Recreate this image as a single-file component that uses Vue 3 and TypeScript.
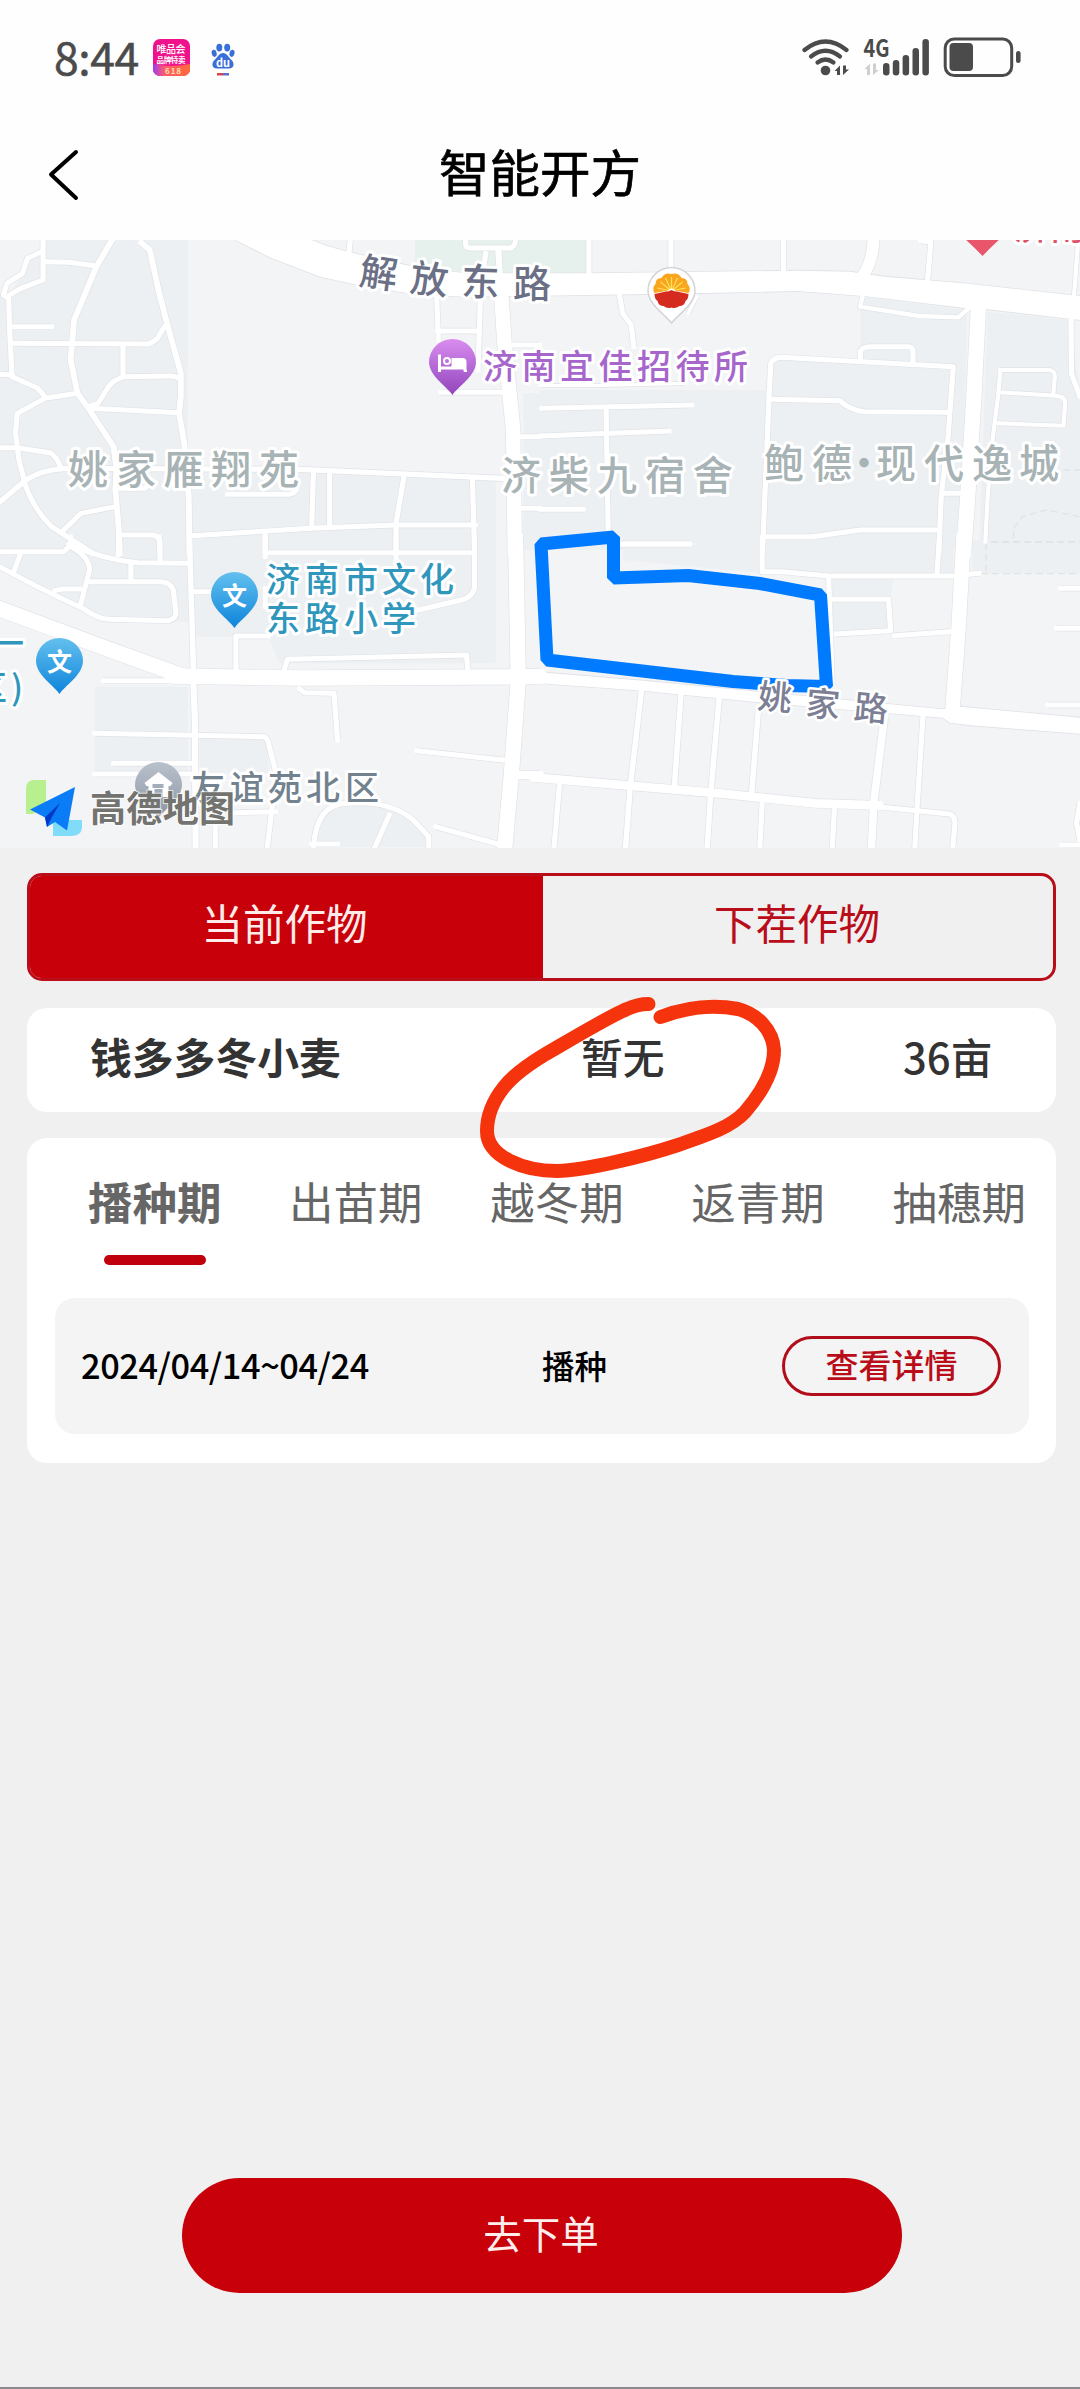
<script setup lang="ts">
import { ref } from 'vue'

interface Road { d: string; w?: number }
interface Tile { transform: string; areas: string[]; wide: string[]; roads: Road[]; dashed?: string }
interface Label { text: string; x: string; y: string; size: number; kind: string; rotate?: string }

// The map is made of four tiles; every tile has a 1568 x 960 grid of its own.
const tileAt = (x: number, y: number) => `translate(${x} ${y}) scale(0.34439 0.33333)`

const tiles: Tile[] = [
  {
    transform: tileAt(0, 230),
    areas: [
      'M135 30H545V960H0V200L25 200L65 130L80 85L125 65Z',
      'M555 720L870 725L1440 750V960H555Z',
      'M1520 490H1568V960H1520Z',
    ],
    wide: ['M680 28L790 85L930 140L1040 165L1200 192L1350 200L1568 197V130L1350 130L1200 110L1060 78L990 60L940 45L900 28Z'],
    roads: [
      { d: 'M1447 60L1455 200', w: 18 },
      { d: 'M1455 190L1465 340L1490 600L1495 970', w: 42 },
      { d: 'M125 30V150L60 175L20 200' },
      { d: 'M120 65L80 85L65 130L20 160L10 195L25 205L28 300L35 440L110 475L130 500' },
      { d: 'M135 95L200 97L280 108' },
      { d: 'M325 30L280 110L215 270L205 390L225 490L260 540L330 650L338 720L335 780L345 900L348 970', w: 17 },
      { d: 'M40 290H150' },
      { d: 'M35 340L430 342Q455 335 465 310L485 280' },
      { d: 'M410 38L435 60L460 180L485 280L525 430V500L520 550L535 640L548 800L550 970', w: 17 },
      { d: 'M357 345V430' },
      { d: 'M525 450Q515 438 490 438L360 440Q330 450 315 470L285 520L255 530' },
      { d: 'M260 535L520 548' },
      { d: 'M0 433L35 435' },
      { d: 'M225 490L130 505L50 550L45 610L55 690L75 770Q100 840 150 890L270 970' },
      { d: 'M0 653H50L145 668Q165 680 175 710' },
      { d: 'M0 815L75 750Q120 720 190 715L870 718L1460 745', w: 16 },
      { d: 'M335 830L235 850L185 900' },
      { d: 'M355 915H445Q465 920 465 940V970' },
      { d: 'M335 775H420L440 760' },
      { d: 'M660 793H840Q855 790 860 780' },
      { d: 'M910 730L905 885' }, { d: 'M957 730V885' },
      { d: 'M1172 745L1150 880V970' }, { d: 'M1372 750L1378 970' },
      { d: 'M560 917L900 895L1150 885H1380' }, { d: 'M770 910V970' },
      { d: 'M1268 200L1273 330' }, { d: 'M1270 303H1390' },
      { d: 'M1410 70L1395 200L1388 420' }, { d: 'M1280 487H1460' },
      { d: 'M1352 20V42Q1352 54 1365 54H1480Q1498 52 1498 20' },
      { d: 'M1017 30L1012 80' },
      { d: 'M1515 620H1568' }, { d: 'M1515 835H1568' }, { d: 'M1490 345H1568' },
    ],
  },
  {
    transform: tileAt(540, 230),
    areas: [
      'M0 480H660V960H0Z',
      'M930 200L1240 240L1225 960H650L670 385H930Z',
      'M1300 245L1540 270L1568 500V960H1275Z',
    ],
    wide: ['M0 130H140L750 122L900 125L1000 140L1230 160L1568 198V270L1300 238L1240 235L940 198L750 183L450 190L0 197Z'],
    roads: [
      { d: 'M142 20V135' }, { d: 'M380 20V130' }, { d: 'M707 20V130', w: 16 },
      { d: 'M968 20Q970 90 935 140', w: 34 },
      { d: 'M1105 32L1135 36L1125 155', w: 15 }, { d: 'M1562 40L1550 205', w: 12 },
      { d: 'M1273 230L1260 500L1242 800L1230 970', w: 44 },
      { d: 'M230 190L240 250L265 285L272 350' }, { d: 'M430 250L455 200', w: 10 },
      { d: 'M937 195L930 230L1100 258L1215 262L1245 235', w: 13 },
      { d: 'M646 970L665 500L670 400Q680 382 700 382L1200 410L1185 620L1165 800L1158 970' },
      { d: 'M930 395V365Q935 350 960 350H1070Q1083 352 1083 365V400' },
      { d: 'M670 508L870 512Q900 540 940 545L1185 547' },
      { d: 'M0 467H150L420 460', w: 10 },
      { d: 'M5 535L440 525' }, { d: 'M0 618L375 603' }, { d: 'M192 540L198 905' },
      { d: 'M0 838H125' }, { d: 'M235 942H435' },
      { d: 'M655 920H790L930 900H1160' }, { d: 'M1175 790H1220' },
      { d: 'M1337 420L1330 500L1315 620L1300 800L1293 935', w: 12 },
      { d: 'M1335 420H1480Q1495 422 1495 440L1490 495', w: 12 },
      { d: 'M1335 487L1500 497Q1525 500 1525 520L1520 587L1330 580', w: 12 },
      { d: 'M1542 255L1543 430L1568 500' },
    ],
    dashed: 'M1375 925V895L1400 860L1470 840L1568 860M1310 936H1568M1520 720H1568',
  },
  {
    transform: tileAt(0, 540),
    areas: ['M0 0H545V245L310 240L0 80Z', 'M560 0H1440V370H810L780 290H560Z', 'M275 440H545V700H275Z', 'M580 590H780V700H580Z', 'M905 920Q915 790 1010 790Q1130 780 1250 890V920Z'],
    wide: [],
    roads: [
      { d: 'M-10 203L300 322L530 408', w: 46 },
      { d: 'M500 408L870 414L1568 410', w: 46 },
      { d: 'M1497 -10L1505 420L1485 700L1465 930', w: 44 },
      { d: 'M550 -10L562 400', w: 16 }, { d: 'M561 420L566 540L568 930', w: 18 },
      { d: 'M0 35H185L205 15V-10' }, { d: 'M200 12Q300 60 400 68L545 70' },
      { d: 'M345 -10L343 45' }, { d: 'M462 -10L465 60' },
      { d: 'M205 20Q260 50 260 90L235 190' }, { d: 'M60 40L40 95' },
      { d: 'M-5 78Q120 150 240 205Q290 240 320 238L490 242Q515 235 510 210L503 150Q495 125 465 125H260' },
      { d: 'M380 70V115' }, { d: 'M160 152L180 147H235' },
      { d: 'M770 -10V50' }, { d: 'M780 38H1375' }, { d: 'M1150 -10V60' },
      { d: 'M1378 -10V140Q1375 170 1340 180L1215 210' },
      { d: 'M560 155H620' }, { d: 'M770 145V200' }, { d: 'M685 390V288H780' },
      { d: 'M825 390L835 358L1355 345L1358 390' },
      { d: 'M300 422H500' }, { d: 'M870 447L885 458L970 460L980 600' },
      { d: 'M275 580L765 590Q780 595 782 620L798 685' },
      { d: 'M330 670H560' }, { d: 'M275 702H560' }, { d: 'M1210 632L1460 660' },
      { d: 'M1490 705H1568', w: 26 },
      { d: 'M680 818L800 815' }, { d: 'M793 780L775 930' }, { d: 'M625 860V930' },
      { d: 'M910 930Q915 790 1010 790Q1130 780 1200 840L1245 890V930' },
      { d: 'M1130 825L1085 930' }, { d: 'M1265 860L1445 912' }, { d: 'M905 912H980' },
    ],
  },
  {
    transform: tileAt(540, 540),
    areas: ['M240 10H640V100L240 60Z', 'M655 0H1200V105H655Z', 'M848 118H1025L1005 280H848Z', 'M1255 0H1568V100H1255Z'],
    wide: ['M-20 395L300 422L1010 492L1170 508L1220 500L1568 533V581L1250 556L1190 548L1170 533L620 485L300 452L-20 428Z'],
    roads: [
      { d: 'M-20 712L270 738L500 758L800 790L985 796', w: 26 },
      { d: 'M980 800L1190 822Q1205 828 1205 850L1198 930' },
      { d: 'M1230 -10L1215 270L1197 520', w: 42 },
      { d: 'M645 -10V95H700L840 108L1200 108L1275 100' },
      { d: 'M838 110L848 420' }, { d: 'M850 178H1012L1018 272L860 282' },
      { d: 'M1160 -10L1153 100' }, { d: 'M1030 287L1190 275' }, { d: 'M240 12H435' },
      { d: 'M1512 145H1568' }, { d: 'M1500 265H1568' }, { d: 'M1475 495H1568' },
      { d: 'M295 450L262 740L248 930', w: 16 }, { d: 'M410 455L390 740', w: 16 },
      { d: 'M520 475L495 770L485 930', w: 16 }, { d: 'M635 500L615 755', w: 16 },
      { d: 'M1000 530L970 780L962 930', w: 22 }, { d: 'M1112 530L1095 800L1088 930' },
      { d: 'M57 730L40 930' }, { d: 'M645 790L638 930' }, { d: 'M855 805L848 930' },
      { d: 'M1568 790L1558 850L1568 900' }, { d: 'M1515 915H1568' },
    ],
    dashed: 'M1295 10V95M1310 5H1568M1280 101H1568',
  },
]

const labels: Label[] = [
  { text: '解放东路', x: '358 409 461 513', y: '284 291 295 297', size: 38, kind: 'street', rotate: '8 6 2 0' },
  { text: '济南宜佳招待所', x: '483 521.5 560 598.5 637 675.5 714', y: '379', size: 34, kind: 'hotel' },
  { text: '姚家雁翔苑', x: '68 116 163.5 211 259', y: '484', size: 40, kind: 'estate' },
  { text: '济柴九宿舍', x: '501 549 597 645 693', y: '490', size: 40, kind: 'estate' },
  { text: '鲍德', x: '764 812', y: '478', size: 40, kind: 'estate' },
  { text: '现代逸城', x: '876 924 972 1019', y: '478', size: 40, kind: 'estate' },
  { text: '·', x: '859', y: '478', size: 40, kind: 'estate dot' },
  { text: '济南市文化', x: '266 305 344 382 420', y: '592', size: 34, kind: 'school' },
  { text: '东路小学', x: '266 305 344 382', y: '631', size: 34, kind: 'school' },
  { text: '一', x: '-10', y: '656', size: 34, kind: 'school' },
  { text: '区)', x: '-27 11', y: '700', size: 34, kind: 'school' },
  { text: '姚家路', x: '757 805 853', y: '708 715 719', size: 34, kind: 'lane', rotate: '5 5 5' },
  { text: '友谊苑北区', x: '191 230 268 306 345', y: '800', size: 34, kind: 'homes' },
  { text: '济南历', x: '1014 1050 1086', y: '240', size: 34, kind: 'alert' },
]

const pinShape = 'M0 32C-5 24 -23.5 13 -23.5 -1A23.5 23 0 0 1 23.5 -1C23.5 13 5 24 0 32Z'

const crops = ['当前作物', '下茬作物']
const activeCrop = ref(0)
const stages = ['播种期', '出苗期', '越冬期', '返青期', '抽穗期']
const activeStage = ref(0)
const signal = [
  { x: 883, y: 63 }, { x: 892.8, y: 60 }, { x: 902.6, y: 55 }, { x: 912.5, y: 48 }, { x: 922.4, y: 39 },
]
</script>

<template>
  <div class="page">
    <header class="top">
      <div class="status">
        <span class="clock">8:44</span>
        <svg class="app-icons" width="84" height="40" viewBox="152 39 84 40">
          <defs>
            <linearGradient id="vipBand" x1="0" x2="1"><stop offset="0" stop-color="#9a3cf0" /><stop offset=".3" stop-color="#ff5a6e" /><stop offset="1" stop-color="#ff6a35" /></linearGradient>
            <clipPath id="vipClip"><rect x="153" y="40" width="37" height="37" rx="7" /></clipPath>
          </defs>
          <g clip-path="url(#vipClip)">
            <rect x="153" y="40" width="37" height="37" fill="#f0128c" />
            <path d="M153 65Q171 69 190 65V77H153Z" fill="url(#vipBand)" />
            <text x="156.500" y="54" font-size="10" textLength="29" font-weight="500" fill="#fff">唯品会</text>
            <text x="156.500" y="64" font-size="7.500" textLength="29" font-weight="700" fill="#fff">品牌特卖</text>
            <text x="165" y="74.500" font-size="8" textLength="16" font-weight="700" fill="#ffe0b0">618</text>
          </g>
          <g fill="#3b6fd8">
            <ellipse cx="219.300" cy="48.600" rx="3" ry="3.900" /><ellipse cx="227.200" cy="48.600" rx="3" ry="3.900" />
            <ellipse cx="214.200" cy="54.300" rx="2.500" ry="3.600" transform="rotate(-12 214.200 54.300)" /><ellipse cx="232" cy="54.300" rx="2.500" ry="3.600" transform="rotate(12 232 54.300)" />
            <path d="M223 54C227 54 228.500 58.500 231.500 61C235 64.500 234 69.500 229 69.500H217C212 69.500 211 64.500 214.500 61C217.500 58.500 219 54 223 54Z" />
          </g>
          <text x="216" y="67.500" font-size="11" textLength="14" font-weight="700" fill="#fff">du</text>
          <rect x="217" y="74" width="6" height="2.500" fill="#d8434a" /><rect x="223" y="74" width="6" height="2.500" fill="#5a6fd0" />
        </svg>
        <svg class="system-icons" width="220" height="42" viewBox="802 36 220 42">
          <g fill="none" stroke="#4b4b4b" stroke-width="4.200" stroke-linecap="round">
            <path d="M804.500 50Q825.500 33 846.500 50" /><path d="M811 56.500Q825.500 45 840 56.500" /><path d="M817.500 62.500Q825.500 56.500 833.500 62.500" />
          </g>
          <g fill="#4b4b4b">
            <circle cx="825.500" cy="70.500" r="4.800" />
            <path d="M834.500 71L840 65.500V75H837V71ZM843 65.500H846V69.500H849L843 75Z" />
            <text x="863.500" y="57" font-size="24" font-weight="700" textLength="26" lengthAdjust="spacingAndGlyphs">4G</text>
            <rect v-for="bar in signal" :key="bar.x" :x="bar.x" :y="bar.y" width="6.500" :height="75.500 - bar.y" rx="3.200" />
            <rect x="949.500" y="43" width="23.500" height="28" rx="4" />
            <rect x="1016" y="51" width="4.600" height="12" rx="2.300" />
          </g>
          <path d="M864.500 69L870 63.500V75H867V69ZM873 63.500H876V70H879L873 75Z" fill="#cfcfcf" />
          <rect x="945.200" y="39" width="66.500" height="36.500" rx="9" fill="none" stroke="#4b4b4b" stroke-width="3" />
        </svg>
      </div>
      <nav class="title-bar">
        <svg class="back" width="34" height="56" viewBox="47 147 34 56"><path d="M76 152L51 174.500L76 198" fill="none" stroke="#000" stroke-width="4" stroke-linecap="round" stroke-linejoin="round" /></svg>
        <h1>智能开方</h1>
      </nav>
    </header>

    <svg class="map" width="1080" height="608" viewBox="0 240 1080 608">
      <defs>
        <linearGradient id="blue" x2="0" y2="1"><stop offset="0" stop-color="#63c0ee" /><stop offset="1" stop-color="#0e84db" /></linearGradient>
        <linearGradient id="purple" x2="0" y2="1"><stop offset="0" stop-color="#da8cee" /><stop offset=".55" stop-color="#b066d4" /><stop offset="1" stop-color="#9444ba" /></linearGradient>
        <linearGradient id="grey" x2="0" y2="1"><stop offset="0" stop-color="#b9c1cc" /><stop offset="1" stop-color="#8b95a3" /></linearGradient>
      </defs>
      <rect y="240" width="1080" height="608" fill="#f3f4f6" />
      <g v-for="(tile, i) in tiles" :key="'a' + i" :transform="tile.transform">
        <path v-for="a in tile.areas" :key="a" :d="a" fill="#edf0f3" />
      </g>
      <path d="M415 240H587V273H540L478 273L415 266Z" fill="#e6f1ed" />
      <g v-for="(tile, i) in tiles" :key="'c' + i" :transform="tile.transform" fill="none" stroke="#e0e3e7" stroke-linejoin="round">
        <path v-for="a in tile.wide" :key="a" :d="a" stroke-width="5" />
        <path v-for="r in tile.roads" :key="r.d" :d="r.d" :stroke-width="(r.w ?? 15) + 4" />
        <path v-if="tile.dashed" :d="tile.dashed" stroke-width="4" stroke-dasharray="20 12" stroke="#dfe3e7" />
      </g>
      <g v-for="(tile, i) in tiles" :key="'r' + i" :transform="tile.transform" fill="none" stroke="#fff" stroke-linejoin="round" stroke-linecap="round">
        <path v-for="a in tile.wide" :key="a" :d="a" fill="#fff" stroke="none" />
        <path v-for="r in tile.roads" :key="r.d" :d="r.d" :stroke-width="r.w ?? 15" />
      </g>

      <path d="M541 544L613.500 537V578L688 575.500L760 583.500L820.500 595L826.500 686.500L786 685.500L733 681.500L547 660Z" fill="none" stroke="#007bff" stroke-width="13" stroke-linejoin="bevel" />

      <g transform="translate(452.500 363)"><path :d="pinShape" fill="url(#purple)" />
        <path d="M-13 -8.500V9M-13 5H13M13 7V9" stroke="#fff" stroke-width="3" fill="none" /><path d="M-1 -5H10Q14 -5 14 -1V8.500H11V5H-1Z" fill="#fff" /><circle cx="-5.500" cy="-2" r="3" fill="none" stroke="#fff" stroke-width="2" />
      </g>
      <g v-for="p in ['translate(234.500 596)', 'translate(59.500 662)']" :key="p" :transform="p">
        <path :d="pinShape" fill="url(#blue)" /><text class="pin-text" x="0" y="9" text-anchor="middle">文</text>
      </g>
      <g transform="translate(158.500 786)"><path :d="pinShape" fill="url(#grey)" />
        <path d="M0 -14L14 -3L12 0H10V11H4V3H-4V11H-10V0H-12L-14 -3Z" fill="#fff" /><path d="M-6 -2H5V2H-6Z" fill="#a4adba" />
      </g>
      <g transform="translate(671.500 291)">
        <path d="M0 32C-5 25 -23.500 13 -23.500 0A23.500 23.500 0 0 1 23.500 0C23.500 13 5 25 0 32Z" fill="#fff" stroke="#d5d5d8" stroke-width="1.500" />
        <path d="M-17 2Q-20 -3 -16 -7Q-16 -13 -10 -13Q-7 -19 0 -17Q7 -19 10 -13Q16 -13 16 -7Q20 -3 17 2L0 -1Z" fill="#f9a51d" />
        <path d="M0 0V-14M0 0L-6 -13M0 0L6 -13M0 0L-11 -9M0 0L11 -9M0 0L-14 -3M0 0L14 -3" stroke="#ffe15b" stroke-width="1.200" />
        <path d="M-17 3Q-7 1 0 -1Q7 1 17 3Q17 8 14 10Q13 15 8 15Q4 18 0 16.500Q-4 18 -8 15Q-13 15 -14 10Q-17 8 -17 3Z" fill="#d42a20" /><path d="M-5 1Q0 -6 5 1L0 -1Z" fill="#fff" />
      </g>
      <path d="M964 238H1001Q992 246 982.500 256Q974 247 964 238Z" fill="#e9566c" />

      <text v-for="l in labels" :key="l.text + l.y" :class="['label', l.kind]" :x="l.x" :y="l.y" :rotate="l.rotate" :font-size="l.size">{{ l.text }}</text>

      <path d="M46 780H34Q26 780 26 789V814H33L46 806Z" fill="#b9f08f" /><path d="M53 820H82V828Q81 836 71 836H53Z" fill="#80dcf8" />
      <path d="M75 787L30 809.500L45 817.500L47 827L55 822L67 830.500Z" fill="#0a7cf5" /><path d="M60 803L45 817.500L47 827L52 817Z" fill="#0038c8" />
      <text class="brand" x="90" y="822" textLength="145">高德地图</text>
    </svg>

    <main class="content">
      <div class="segments">
        <button v-for="(crop, i) in crops" :key="crop" :class="{ active: i === activeCrop }" @click="activeCrop = i">{{ crop }}</button>
      </div>

      <section class="summary">
        <strong>钱多多冬小麦</strong><span class="status-text">暂无</span><span class="acreage">36亩</span>
        <svg class="scribble" width="320" height="190" viewBox="470 990 320 190">
          <path d="M648.500 1004Q638 1004 627 1009C608 1017 570 1040 544 1055C526 1066 512 1077 504 1087C492 1102 487 1116 487 1131C487 1157 524 1171 557 1171C586 1170 642 1157 678 1145C710 1134 731 1127 745 1112C757 1098 774 1075 774 1050C773 1030 757 1014 738 1009Q700 1002 660.500 1017" fill="none" stroke="#f5330d" stroke-width="14" stroke-linecap="round" stroke-linejoin="round" />
        </svg>
      </section>

      <section class="plan">
        <div class="stages">
          <button v-for="(stage, i) in stages" :key="stage" :class="{ active: i === activeStage }" @click="activeStage = i">{{ stage }}</button>
        </div>
        <div class="task">
          <span class="date">2024/04/14~04/24</span>
          <span class="job">播种</span>
          <button>查看详情</button>
        </div>
      </section>
    </main>

    <footer><button>去下单</button></footer>
  </div>
</template>

<style>
body { margin: 0; background: #f0f0f0; }
</style>

<style scoped>
.page {
  box-sizing: border-box;
  display: flex;
  flex-direction: column;
  width: 1080px;
  height: 2389px;
  overflow: hidden;
  background: #f0f0f0;
  border-bottom: 2px solid #8c8a8c;
  font-family: "Noto Sans CJK SC", sans-serif;
  color: #333;
}
button { font: inherit; margin: 0; padding: 0; border: 0; background: none; color: inherit; cursor: pointer; white-space: nowrap; }
svg { display: block; flex: none; }
.top { height: 240px; background: #fefefe; flex: none; }
.status { display: flex; align-items: center; height: 116px; padding: 0 58px 0 54px; box-sizing: border-box; }
.clock { width: 98px; font-size: 44.5px; font-weight: 400; letter-spacing: -0.4px; line-height: 60px; color: #4b4b4b; padding-bottom: 4px; -webkit-text-stroke: 0.5px #4b4b4b; }
.system-icons { margin-left: auto; margin-top: -2px; }
.title-bar { display: grid; grid-template-columns: 130px 1fr 130px; align-items: center; height: 116px; }
.back { margin-left: 47px; margin-top: 2px; }
h1 { margin: 0; padding-bottom: 8px; font-size: 50.5px; font-weight: 400; line-height: 70px; text-align: center; color: #000; -webkit-text-stroke: 0.7px #000; }
.map { overflow: hidden; }
.label { paint-order: stroke; stroke: #fff; stroke-width: 6px; stroke-linejoin: round; font-weight: 500; }
.street { fill: #6b7086; }
.lane { fill: #7d8095; stroke-width: 5px; }
.hotel { fill: #a666cb; }
.estate { fill: #a8b3b5; }
.dot { text-anchor: middle; stroke: none; }
.school { fill: #2f96bc; }
.homes { fill: #73828f; }
.alert { fill: #dd526a; }
.pin-text { font-size: 25px; font-weight: 700; fill: #fff; }
.brand { font-size: 36px; font-weight: 700; fill: #73736f; paint-order: stroke; stroke: #ffffffb0; stroke-width: 2px; }
.dot { transform: translateX(5px); }
.content { padding: 25px 24px 0 27px; display: flex; flex-direction: column; }
.segments { display: grid; grid-template-columns: 513px 1fr; height: 108px; box-sizing: border-box; border: 3px solid #b90d19; border-radius: 15px; overflow: hidden; }
.segments button { font-size: 41.5px; line-height: 60px; padding-bottom: 10px; padding-right: 2px; color: #b90d19; }
.segments .active { background: #c7000a; color: #ffecea; padding-right: 4px; }
.summary { position: relative; display: grid; grid-template-columns: 491px 322px 1fr; align-items: center; height: 104px; margin-top: 27px; padding-left: 63px; padding-bottom: 9px; box-sizing: border-box; background: #fff; border-radius: 20px; font-size: 41.8px; line-height: 60px; font-weight: 500; }
.summary strong { font-weight: 700; }
.scribble { position: absolute; left: 443px; top: -18px; pointer-events: none; }
.plan { height: 325px; margin-top: 26px; padding: 26px 27px 0 28px; box-sizing: border-box; background: #fff; border-radius: 20px; }
.stages { display: flex; justify-content: space-between; height: 134px; padding: 0 3px 0 33px; }
.stages button { display: flex; flex-direction: column; align-items: center; height: 102px; font-size: 44.5px; line-height: 74px; color: #666; }
.stages .active { font-weight: 700; }
.stages .active::after { content: ""; width: 102px; height: 10px; margin-top: 17px; border-radius: 5px; background: #c1000e; }
.task { display: grid; grid-template-columns: 461px 240px 219px; align-items: center; height: 136px; padding-left: 26px; box-sizing: border-box; border-radius: 20px; background: #f4f4f4; color: #000; font-weight: 500; }
.date { font-size: 34.3px; letter-spacing: -0.4px; padding-bottom: 4px; }
.job { font-size: 32.500px; padding-bottom: 4px; }
.task button { height: 60px; box-sizing: border-box; border: 3px solid #b20d1a; border-radius: 30px; color: #b90d19; font-size: 33px; line-height: 50px; padding-bottom: 4px; }
footer { display: flex; justify-content: center; margin-top: auto; padding: 0 0 94px 4px; }
footer button { width: 720px; height: 115px; padding-bottom: 7px; padding-right: 2px; border-radius: 58px; background: #c7000a; color: #ffeeec; font-size: 38.500px; }
</style>
